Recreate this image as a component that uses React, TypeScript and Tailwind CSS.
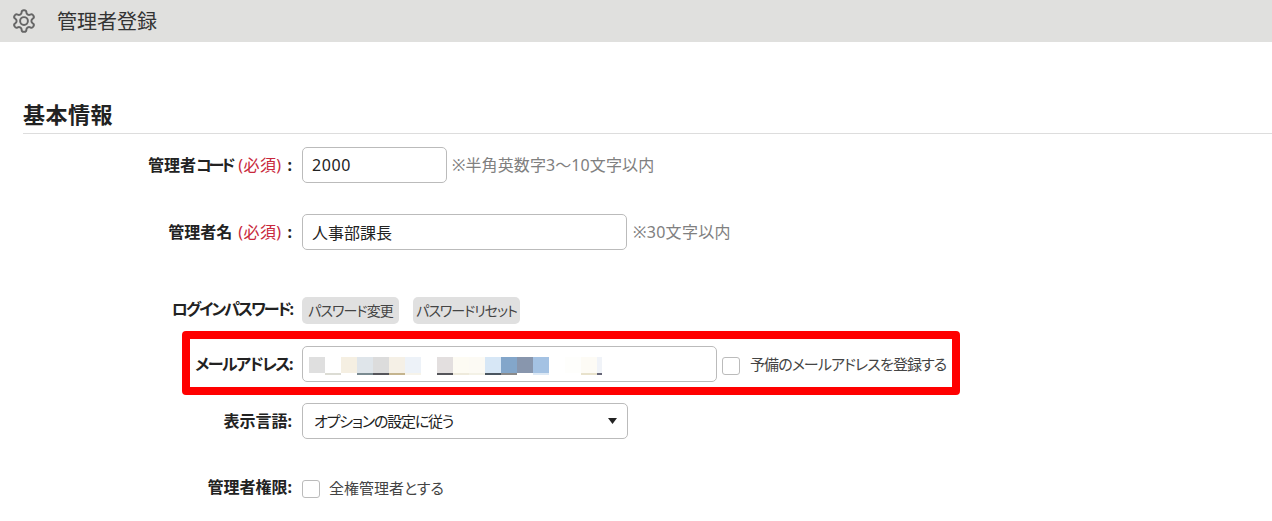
const blurBlocks = [
    { top: 'bg-[#dfdfdf]', bottom: 'bg-white', width: 'w-4' },
    { top: 'bg-white', bottom: 'bg-[#dcdcd4]', width: 'w-4' },
    { top: 'bg-[#f5efe2]', bottom: 'bg-white', width: 'w-4' },
    { top: 'bg-[#dfe5ea]', bottom: 'bg-[#7a8a90]', width: 'w-4' },
    { top: 'bg-[#dcdcdc]', bottom: 'bg-[#55555a]', width: 'w-4' },
    { top: 'bg-[#f5f0e6]', bottom: 'bg-[#c4b48e]', width: 'w-4' },
    { top: 'bg-[#edf2f8]', bottom: 'bg-[#f6f3ea]', width: 'w-4' },
    { top: 'bg-white', bottom: 'bg-white', width: 'w-4' },
    { top: 'bg-[#e3dfdf]', bottom: 'bg-[#55555a]', width: 'w-4' },
    { top: 'bg-[#fdfbf3]', bottom: 'bg-[#eeeadc]', width: 'w-4' },
    { top: 'bg-[#fcfaf4]', bottom: 'bg-[#f3f1e6]', width: 'w-4' },
    { top: 'bg-[#d7e7f6]', bottom: 'bg-[#4a5560]', width: 'w-4' },
    { top: 'bg-[#83a6ca]', bottom: 'bg-[#8a8a8a]', width: 'w-4' },
    { top: 'bg-[#8896ad]', bottom: 'bg-white', width: 'w-4' },
    { top: 'bg-[#a4c2e3]', bottom: 'bg-[#dce8f4]', width: 'w-4' },
    { top: 'bg-white', bottom: 'bg-white', width: 'w-4' },
    { top: 'bg-[#fefefc]', bottom: 'bg-white', width: 'w-4' },
    { top: 'bg-[#fdfbf5]', bottom: 'bg-[#e8e2cc]', width: 'w-4' },
    { top: 'bg-[#f0f3f8]', bottom: 'bg-[#667]', width: 'w-[5px]' },
];

function Required() {
    return <span className="ml-[6px] mr-[6px] text-[16px] font-normal tracking-[0.4px] text-[#c8283c]">(必須)</span>;
}

function Label({ children, className = '' }: { children: React.ReactNode; className?: string }) {
    return <div className={`w-[293px] shrink-0 whitespace-nowrap pr-[1px] text-right text-[16px] font-bold text-[#222] ${className}`}>{children}</div>;
}

function CheckBox() {
    return <span className="block size-[18px] shrink-0 rounded-[3px] border border-[#bbb] bg-white"></span>;
}

function Gear() {
    return (
        <svg width="26" height="26" viewBox="0 0 24 24" fill="none" stroke="#666" strokeWidth="1.8" strokeLinecap="round" strokeLinejoin="round">
            <path d="M12.22 2h-.44a2 2 0 0 0-2 2v.18a2 2 0 0 1-1 1.73l-.43.25a2 2 0 0 1-2 0l-.15-.08a2 2 0 0 0-2.73.73l-.22.38a2 2 0 0 0 .73 2.73l.15.1a2 2 0 0 1 1 1.72v.51a2 2 0 0 1-1 1.74l-.15.09a2 2 0 0 0-.73 2.73l.22.38a2 2 0 0 0 2.73.73l.15-.08a2 2 0 0 1 2 0l.43.25a2 2 0 0 1 1 1.73V20a2 2 0 0 0 2 2h.44a2 2 0 0 0 2-2v-.18a2 2 0 0 1 1-1.73l.43-.25a2 2 0 0 1 2 0l.15.08a2 2 0 0 0 2.73-.73l.22-.39a2 2 0 0 0-.73-2.73l-.15-.08a2 2 0 0 1-1-1.74v-.5a2 2 0 0 1 1-1.74l.15-.09a2 2 0 0 0 .73-2.73l-.22-.38a2 2 0 0 0-2.73-.73l-.15.08a2 2 0 0 1-2 0l-.43-.25a2 2 0 0 1-1-1.73V4a2 2 0 0 0-2-2z" />
            <circle cx="12" cy="12" r="3.6" />
        </svg>
    );
}

export default function App() {
    const inputBase = 'h-9 rounded-[5px] border border-[#bbb] bg-white px-[9px] text-[16px] text-[#222] outline-none';

    return (
        <div className="h-[521px] w-[1272px] overflow-hidden bg-white [font-feature-settings:'palt']" style={{ fontFamily: "'Noto Sans', 'Noto Sans CJK JP', sans-serif" }}>
            <div className="flex h-[42px] items-center bg-[#e0e0de] pl-[11px]">
                <Gear />
                <span className="ml-[20px] mt-[2px] text-[20px] font-normal text-[#333]">管理者登録</span>
            </div>

            <h2 className="ml-[23px] mt-[54px] h-[38px] border-b border-[#ddd] text-[22px] font-bold leading-[37px] tracking-[0.5px] text-[#222]">基本情報</h2>

            <div className="mt-[13px] flex h-9 items-center">
                <Label>管理者<span className="tracking-[-3px]">コード</span><Required />:</Label>
                <input className={`${inputBase} ml-[9px] w-[145px] tracking-[0.6px]`} defaultValue="2000" />
                <span className="ml-[5px] text-[16px] tracking-[0.1px] text-[#808080]">※半角英数字3〜10文字以内</span>
            </div>

            <div className="mt-[31px] flex h-9 items-center">
                <Label>管理者名<Required />:</Label>
                <input className={`${inputBase} ml-[9px] w-[325px]`} defaultValue="人事部課長" />
                <span className="ml-[6px] text-[16px] tracking-[0.3px] text-[#808080]">※30文字以内</span>
            </div>

            <div className="mt-[47px] flex h-[27px] items-center">
                <Label className="mb-[3px] tracking-[-2px]">ログインパスワード:</Label>
                <button className="ml-[9px] h-[27px] w-[97px] whitespace-nowrap rounded-[5px] bg-[#e0e0e0] text-[14px] tracking-[-0.9px] text-[#444]">パスワード変更</button>
                <button className="ml-[14px] h-[27px] w-[107px] whitespace-nowrap rounded-[5px] bg-[#e0e0e0] text-[14px] tracking-[-1px] text-[#444]">パスワードリセット</button>
            </div>

            <div className="ml-[182px] mt-[7px] flex h-[64px] w-[778px] items-center rounded-[4px] border-[8px] border-[#f00]">
                <Label className="ml-[-190px] mt-[2px] tracking-[-1.5px]">メールアドレス:</Label>
                <div className="ml-[9px] mt-[2px] flex h-9 w-[415px] shrink-0 items-center rounded-[5px] border border-[#bbb] bg-white pl-[6px]">
                    {blurBlocks.map((block, i) => (
                        <div key={i} className={`mt-[3px] h-[18px] ${block.width}`}>
                            <div className={`h-4 ${block.top}`}></div>
                            <div className={`h-[2px] ${block.bottom}`}></div>
                        </div>
                    ))}
                </div>
                <div className="ml-[5px] mt-[6px]"><CheckBox /></div>
                <span className="ml-[10px] mt-[3px] whitespace-nowrap text-[15px] tracking-[-0.9px] text-[#444]">予備のメールアドレスを登録する</span>
            </div>

            <div className="mt-[8px] flex h-9 items-center">
                <Label>表示言語:</Label>
                <div className="ml-[9px] flex h-9 w-[326px] items-center justify-between rounded-[5px] border border-[#bbb] bg-white pl-[11px] pr-[10px]">
                    <span className="text-[15px] tracking-[-1.2px] text-[#222]">オプションの設定に従う</span>
                    <svg width="9" height="6" viewBox="0 0 9 6"><path d="M0 0h9L4.500 6z" fill="#222" /></svg>
                </div>
            </div>

            <div className="mt-[40px] flex h-[18px] items-center">
                <Label className="mb-[2px]">管理者権限:</Label>
                <div className="ml-[9px] mt-[2px]"><CheckBox /></div>
                <span className="ml-[9px] text-[15px] text-[#444]">全権管理者とする</span>
            </div>
        </div>
    );
}
